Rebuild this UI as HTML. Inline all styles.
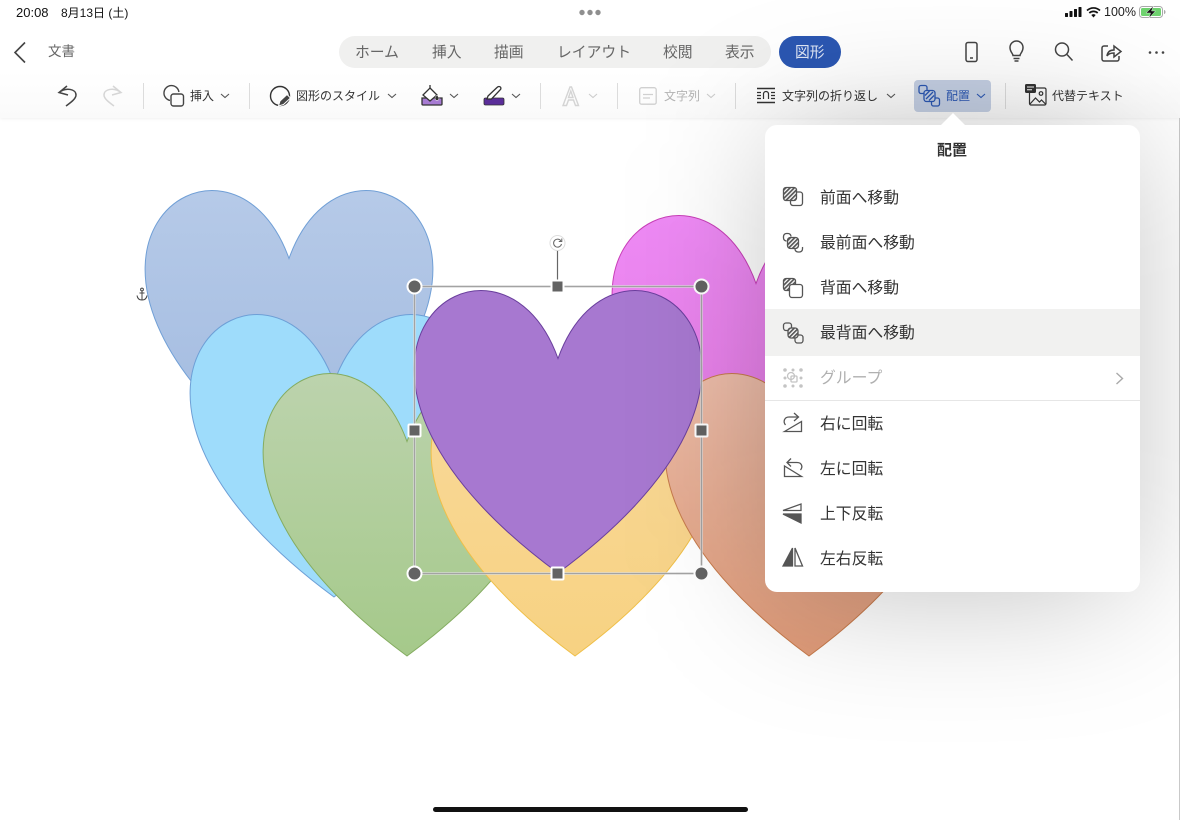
<!DOCTYPE html>
<html lang="ja"><head><meta charset="utf-8"><title>文書</title>
<style>
html,body{margin:0;padding:0;background:#fff}
#p{position:relative;width:1180px;height:820px;overflow:hidden;background:#fff;font-family:"Liberation Sans","Noto Sans CJK JP",sans-serif;color:#333}
#p>*{position:absolute}
.t{white-space:nowrap;line-height:20px;height:20px}
.tab{top:43px;font-size:14.8px;color:#666}
.tb{top:86px;font-size:12px;color:#333}
.dis{color:#b4b4b4}
.sep{top:83px;width:1px;height:26px;background:#dcdcdc}
.m{left:820px;font-size:15.8px;color:#333;line-height:20px;white-space:nowrap}
svg{position:absolute;overflow:visible}
</style></head><body><div id="p">

<div style="left:0;top:0;width:1180px;height:118px;background:linear-gradient(#fff 60%,#fafafa);box-shadow:0 1px 3px rgba(0,0,0,.06)"></div>

<svg style="left:0;top:0" width="1180" height="820" viewBox="0 0 1180 820">
<defs>
<path id="h" d="M143.5 71.5C203.3 -95.3 435 71.5 143.5 286C-148 71.5 83.7 -95.3 143.5 71.5Z"/>
<linearGradient id="g1" x1="0" y1="0" x2="0" y2="1"><stop offset="0" stop-color="#b6cae8"/><stop offset="1" stop-color="#a0b9df"/></linearGradient>
<linearGradient id="g2" x1="0" y1="0" x2="0" y2="1"><stop offset="0" stop-color="#bcd3ad"/><stop offset="1" stop-color="#a5c98a"/></linearGradient>
<linearGradient id="g3" x1="0" y1="0" x2="0" y2="1"><stop offset="0" stop-color="#f9d99a"/><stop offset="1" stop-color="#f7d282"/></linearGradient>
<linearGradient id="g4" x1="0" y1="0" x2="0" y2="1"><stop offset="0" stop-color="#ecbca9"/><stop offset="1" stop-color="#de9a78"/></linearGradient>
<linearGradient id="g5" x1="0" y1="0" x2="0" y2="1"><stop offset="0" stop-color="#ee8af5"/><stop offset="1" stop-color="#e27ae0"/></linearGradient>
<pattern id="ht" width="3" height="3" patternUnits="userSpaceOnUse" patternTransform="rotate(-45)"><rect width="3" height="3" fill="#fff" stroke="none"/><rect width="3" height="1.700" fill="#555" stroke="none"/></pattern>
</defs>
<use href="#h" transform="translate(145.5,187)" fill="url(#g1)" stroke="#709fd6" stroke-width="1"/>
<use href="#h" transform="translate(612.5,212)" fill="url(#g5)" stroke="#c83fb8" stroke-width="1"/>
<use href="#h" transform="translate(190.5,311)" fill="#9edcfb" stroke="#6d9fd6" stroke-width="1"/>
<use href="#h" transform="translate(263.5,370)" fill="url(#g2)" stroke="#84ac60" stroke-width="1"/>
<use href="#h" transform="translate(431.5,370)" fill="url(#g3)" stroke="#efbf48" stroke-width="1"/>
<use href="#h" transform="translate(665.5,370)" fill="url(#g4)" stroke="#c67a4b" stroke-width="1"/>
<use href="#h" transform="translate(414.5,287)" fill="#a778d0" stroke="#6a3f9d" stroke-width="1"/>

<!-- selection -->
<rect x="414.5" y="286.5" width="287" height="287" fill="none" stroke="#fff" stroke-width="3" opacity=".55"/>
<rect x="414.5" y="286.5" width="287" height="287" fill="none" stroke="#a3a3a3" stroke-width="1.6"/>
<line x1="557.5" y1="250" x2="557.5" y2="286" stroke="#666" stroke-width="1.2"/>
<g fill="#636363" stroke="#fff" stroke-width="2">
<circle cx="414.5" cy="286.5" r="7"/><circle cx="701.5" cy="286.5" r="7"/>
<circle cx="414.5" cy="573.5" r="7"/><circle cx="701.5" cy="573.5" r="7"/>
<rect x="551.5" y="280.5" width="12" height="12" rx="1"/><rect x="408.5" y="424.5" width="12" height="12" rx="1"/>
<rect x="695.5" y="424.5" width="12" height="12" rx="1"/><rect x="551.5" y="567.5" width="12" height="12" rx="1"/>
</g>
<circle cx="557.5" cy="243" r="7.5" fill="#fff" stroke="#ddd" stroke-width="1"/>
<path d="M561 241a4 4 0 1 0 .5 3" fill="none" stroke="#666" stroke-width="1"/><path d="M561.8 238.5v3h-3" fill="none" stroke="#666" stroke-width="1"/>

<!-- anchor -->
<g fill="none" stroke="#444" stroke-width="1">
<circle cx="142" cy="289.5" r="1.4"/><path d="M142 291v9M139.5 293h5M137 295.500c.5 3 2.500 4.500 5 4.500s4.500-1.500 5-4.500"/>
</g>
</svg>

<!-- status -->
<div class="t" style="left:16px;top:3px;font-size:13px;color:#111">20:08</div>
<div class="t" style="left:61px;top:3px;font-size:12px;color:#111">8月13日 (土)</div>
<svg style="left:579px;top:9px" width="22" height="7"><circle cx="3" cy="3.500" r="2.700" fill="#8f8f8f"/><circle cx="11" cy="3.500" r="2.700" fill="#8f8f8f"/><circle cx="19" cy="3.500" r="2.700" fill="#8f8f8f"/></svg>
<svg style="left:1065px;top:6px" width="36" height="12" fill="#111"><rect x="0" y="7" width="3" height="4" rx=".6"/><rect x="4.500" y="5" width="3" height="6" rx=".6"/><rect x="9" y="3" width="3" height="8" rx=".6"/><rect x="13.500" y="1" width="3" height="10" rx=".6"/>
<path d="M22 4.500a9.500 9.500 0 0 1 13 0M24.300 7a6.200 6.200 0 0 1 8.400 0" fill="none" stroke="#111" stroke-width="1.700"/><path d="M26.300 9a3.200 3.200 0 0 1 4.400 0L28.500 11.500z"/></svg>
<div class="t" style="left:1104px;top:2px;font-size:12.5px;color:#222">100%</div>
<svg style="left:1139px;top:6px" width="27" height="12"><rect x=".5" y=".5" width="23" height="11" rx="3" fill="#fff" stroke="#aaa"/><rect x="2" y="2" width="20" height="8" rx="1.500" fill="#6fd36f"/><path d="M25 4v4c1 0 1.500-1 1.500-2s-.5-2-1.500-2z" fill="#aaa"/><path d="M14.500 0L7 7h4.500L10 12l6.500-7H12.500z" fill="#111" stroke="#fff" stroke-width=".4"/></svg>

<!-- nav row -->
<svg style="left:13px;top:41px" width="14" height="22" fill="none" stroke="#444" stroke-width="1.600"><path d="M12 1.500L2 11.500l10 10"/></svg>
<div class="t" style="left:48px;top:42px;font-size:13.500px;color:#666">文書</div>

<div style="left:339px;top:36px;width:432px;height:32px;border-radius:16px;background:#f0f0ef"></div>
<div class="t tab" style="left:355px">ホーム</div>
<div class="t tab" style="left:432px">挿入</div>
<div class="t tab" style="left:494px">描画</div>
<div class="t tab" style="left:557px">レイアウト</div>
<div class="t tab" style="left:663px">校閲</div>
<div class="t tab" style="left:725px">表示</div>
<div style="left:779px;top:36px;width:62px;height:32px;border-radius:16px;background:#2b57b2"></div>
<div class="t" style="left:795px;top:43px;font-size:14.8px;color:#dfe6f5">図形</div>

<svg style="left:960px;top:40px" width="200" height="24" fill="none" stroke="#444" stroke-width="1.500">
<rect x="6" y="2.500" width="11" height="19" rx="2"/><path d="M10 18h3"/>
<path d="M53 15.500c0-2-3-3.500-3-8a6.500 6.500 0 0 1 13 0c0 4.500-3 6-3 8zM53.500 18.500h6M54.500 21h4"/>
<circle cx="102" cy="9.500" r="6.500"/><path d="M107 14.500l5.500 6"/>
<path d="M148 6h-4a2 2 0 0 0-2 2v11a2 2 0 0 0 2 2h13a2 2 0 0 0 2-2v-3"/><path d="M147 16c.5-4 3-6 7-6V6l7 5.500-7 5.500v-4c-3 0-5.500 .500-7 3z"/>
<circle cx="190" cy="12.500" r="1.300" fill="#444" stroke="none"/><circle cx="196.500" cy="12.500" r="1.300" fill="#444" stroke="none"/><circle cx="203" cy="12.500" r="1.300" fill="#444" stroke="none"/>
</svg>

<!-- toolbar -->
<svg style="left:56px;top:84px" width="70" height="24" fill="none" stroke="#444" stroke-width="1.500"><path d="M11 2L3 8.500l9 2.500M3 8.500C10 3 20 5 20 11c0 4-6 8-10 11"/><path d="M57 2l8 6.500-9 2.500M65 8.500C58 3 48 5 48 11c0 4 6 8 10 11" stroke="#d6d6d6"/></svg>
<div class="sep" style="left:143px"></div>
<svg style="left:163px;top:85px" width="22" height="22" fill="none" stroke="#444" stroke-width="1.400"><path d="M7 15.400A7.500 7.500 0 1 1 15.900 7"/><rect x="8" y="9" width="12.500" height="12" rx="2.500"/></svg>
<div class="t tb" style="left:190px">挿入</div>
<svg style="left:220px;top:93px" width="10" height="6" fill="none" stroke="#555" stroke-width="1.100"><path d="M1 1l4 3.500L9 1"/></svg>
<div class="sep" style="left:249px"></div>
<svg style="left:269px;top:85px" width="24" height="24" fill="none" stroke="#333" stroke-width="1.400"><circle cx="11" cy="11" r="9.500"/><path d="M9.500 21l1.500-5 7-6.500 3.500 3.500-7 6.500z" fill="#444" stroke="#fff" stroke-width="1"/></svg>
<div class="t tb" style="left:296px">図形のスタイル</div>
<svg style="left:387px;top:93px" width="10" height="6" fill="none" stroke="#555" stroke-width="1.100"><path d="M1 1l4 3.500L9 1"/></svg>
<svg style="left:421px;top:85px" width="24" height="22"><path d="M1 13h20v6a1 1 0 0 1-1 1H2a1 1 0 0 1-1-1z" fill="#a77bd3" stroke="#333" stroke-width="1.300"/><path d="M9 3l7 7-7 6-7-6z" fill="#fff" stroke="#333" stroke-width="1.300"/><path d="M9 0v3" stroke="#333" stroke-width="1.300"/><path d="M16 10c1.500 2 2 2.500 2 3.500a2 2 0 0 1-4 0c0-1 .5-1.500 2-3.500z" fill="#333" stroke="#fff" stroke-width=".5"/></svg>
<svg style="left:449px;top:93px" width="10" height="6" fill="none" stroke="#555" stroke-width="1.100"><path d="M1 1l4 3.500L9 1"/></svg>
<svg style="left:483px;top:85px" width="24" height="22"><rect x="1" y="13" width="20" height="7" rx="1.500" fill="#5b2e9a" stroke="#333" stroke-width=".8"/><path d="M4 14l1-3L14 2.500c2-2 5-.5 3.500 2L8.500 14z" fill="#fff" stroke="#333" stroke-width="1.300"/></svg>
<svg style="left:511px;top:93px" width="10" height="6" fill="none" stroke="#555" stroke-width="1.100"><path d="M1 1l4 3.500L9 1"/></svg>
<div class="sep" style="left:540px"></div>
<svg style="left:562px;top:85px" width="18" height="22" fill="none" stroke="#d4d4d4" stroke-width="1.400"><path d="M1 20.500L8 2h1.500l7 18.500h-3l-2-5.500h-5l-2 5.500zM6.500 12.500h4.500L8.800 6z"/></svg>
<svg style="left:588px;top:93px" width="10" height="6" fill="none" stroke="#ccc" stroke-width="1.100"><path d="M1 1l4 3.500L9 1"/></svg>
<div class="sep" style="left:617px"></div>
<svg style="left:639px;top:87px" width="18" height="18" fill="none" stroke="#d0d0d0" stroke-width="1.300"><rect x=".7" y=".7" width="16.500" height="16.500" rx="2"/><path d="M4 7.500h10M4 11h7"/></svg>
<div class="t tb dis" style="left:664px">文字列</div>
<svg style="left:706px;top:93px" width="10" height="6" fill="none" stroke="#ccc" stroke-width="1.100"><path d="M1 1l4 3.500L9 1"/></svg>
<div class="sep" style="left:735px"></div>
<svg style="left:757px;top:87px" width="19" height="17" fill="none" stroke="#333" stroke-width="1.200"><path d="M0 1.500h18M0 15.500h18" stroke-width="1.500"/><path d="M0 5.500h4M0 8.500h4M0 11.500h4M14 5.500h4M14 8.500h4M14 11.500h4M6.500 12V7a2.500 2.500 0 0 1 5 0v5"/></svg>
<div class="t tb" style="left:782px">文字列の折り返し</div>
<svg style="left:886px;top:93px" width="10" height="6" fill="none" stroke="#555" stroke-width="1.100"><path d="M1 1l4 3.500L9 1"/></svg>

<div style="left:914px;top:80px;width:77px;height:32px;border-radius:4px;background:#c5d0e4"></div>
<svg style="left:918px;top:84px" width="24" height="24" fill="none" stroke="#2b57b2" stroke-width="1.300"><rect x="1" y="1.500" width="8" height="8" rx="2"/><rect x="13.500" y="14" width="8" height="8" rx="2"/><rect x="6" y="6.500" width="11" height="11" rx="2.500" fill="#c5d0e4"/><path d="M8 15l7-7M7 11.500l4.500-4.500M11 16.500l5-5"/></svg>
<div class="t tb" style="left:946px;color:#2b57b2">配置</div>
<svg style="left:976px;top:93px" width="10" height="6" fill="none" stroke="#2b57b2" stroke-width="1.100"><path d="M1 1l4 3.500L9 1"/></svg>
<div class="sep" style="left:1005px"></div>
<svg style="left:1025px;top:84px" width="22" height="22" fill="none" stroke="#333" stroke-width="1.200"><rect x="4.500" y="4" width="16.500" height="17" rx="1.500"/><path d="M5 20l5.500-6 4 4 2-2 4 4"/><circle cx="16" cy="9.500" r="1.800"/><rect x="0" y="0" width="11" height="9" rx="1.500" fill="#333" stroke="none"/><path d="M2 3h7M2 5.800h5" stroke="#fff" stroke-width="1"/></svg>
<div class="t tb" style="left:1052px">代替テキスト</div>

<!-- home indicator -->
<div style="left:433px;top:807px;width:315px;height:5px;border-radius:3px;background:#111"></div>
<div style="left:1179px;top:118px;width:1px;height:702px;background:#c9c9c9"></div>

<!-- popover -->
<div style="left:775px;top:135px;width:355px;height:457px;border-radius:40px;background:rgba(0,0,0,.25);filter:blur(70px)"></div>
<div style="left:765px;top:125px;width:375px;height:467px;border-radius:12px;background:#fff"></div>
<svg style="left:940px;top:113px" width="26" height="13"><path d="M0 13L13 0l13 13z" fill="#fff"/></svg>
<div class="t" style="left:937px;top:141px;font-size:15px;font-weight:bold;color:#333">配置</div>
<div style="left:765px;top:309px;width:375px;height:47px;background:#f1f1f0"></div>
<div style="left:765px;top:400px;width:375px;height:1px;background:#e6e6e6"></div>

<div class="m" style="top:189px">前面へ移動</div>
<div class="m" style="top:234px">最前面へ移動</div>
<div class="m" style="top:279px">背面へ移動</div>
<div class="m" style="top:324px">最背面へ移動</div>
<div class="m" style="top:369px;color:#b0b0b0">グループ</div>
<div class="m" style="top:415px">右に回転</div>
<div class="m" style="top:460px">左に回転</div>
<div class="m" style="top:505px">上下反転</div>
<div class="m" style="top:550px">左右反転</div>

<svg style="left:1115px;top:372px" width="9" height="13" fill="none" stroke="#aaa" stroke-width="1.400"><path d="M1.500 1l6 5.500-6 5.500"/></svg>

<svg style="left:780px;top:184px" width="26" height="26" viewBox="0 0 26 26" fill="none" stroke="#555" stroke-width="1.300">
<path d="M17 8h3a2.500 2.500 0 0 1 2.500 2.500V19a2.500 2.500 0 0 1-2.500 2.500h-7A2.500 2.500 0 0 1 10.500 19v-2"/>
<rect x="3.500" y="3.500" width="13" height="13" rx="2.500" fill="url(#ht)"/>
</svg>
<svg style="left:780px;top:230px" width="26" height="26" viewBox="0 0 26 26" fill="none" stroke="#555" stroke-width="1.300">
<path d="M6.500 11A3 3 0 0 1 3.500 8V6.500a3 3 0 0 1 3-3H8a3 3 0 0 1 3 3"/>
<path d="M22.500 17a3 3 0 0 1 0 1v1a3 3 0 0 1-3 3H18a3 3 0 0 1-3-3"/>
<rect x="7.500" y="7.500" width="11" height="11" rx="3" fill="url(#ht)"/>
</svg>
<svg style="left:780px;top:275px" width="26" height="26" viewBox="0 0 26 26" fill="none" stroke="#555" stroke-width="1.300">
<rect x="3.500" y="3.500" width="12" height="12" rx="2.500" fill="url(#ht)"/>
<rect x="9.500" y="9.500" width="13" height="13" rx="2.500" fill="#fff"/>
</svg>
<svg style="left:780px;top:320px" width="26" height="26" viewBox="0 0 26 26" fill="none" stroke="#555" stroke-width="1.300">
<rect x="3.500" y="3" width="8" height="7.500" rx="2.500" fill="#f1f1f0"/>
<rect x="15" y="15" width="8" height="8" rx="2.500" fill="#f1f1f0"/>
<rect x="8" y="8" width="10" height="10" rx="3" fill="url(#ht)"/>
</svg>
<svg style="left:780px;top:365px" width="26" height="26" viewBox="0 0 26 26" fill="none" stroke="#c4c4c4" stroke-width="1.300">
<g fill="#c4c4c4" stroke="none"><circle cx="5" cy="5" r="1.800"/><circle cx="13" cy="5" r="1.500"/><circle cx="21" cy="5" r="1.800"/><circle cx="5" cy="21" r="1.800"/><circle cx="13" cy="21" r="1.500"/><circle cx="21" cy="21" r="1.800"/><circle cx="5" cy="13" r="1.500"/><circle cx="21" cy="13" r="1.500"/></g>
<circle cx="11" cy="11" r="3.500"/><rect x="11" y="11" width="6" height="6" rx="1"/>
</svg>

<svg style="left:780px;top:411px" width="26" height="26" viewBox="0 0 26 26" fill="none" stroke="#555" stroke-width="1.300">
<path d="M4.500 20.500L21.500 10.500v10z"/><path d="M18 6H9C4 6 3 11 5.500 14"/><path d="M14 2l4.500 4L14 10"/>
</svg>
<svg style="left:780px;top:456px" width="26" height="26" viewBox="0 0 26 26" fill="none" stroke="#555" stroke-width="1.300">
<path d="M4.500 10v10.500h17z"/><path d="M7 6.500h10c5 0 6 4.500 3.500 7.500"/><path d="M11 2.500L7 6.500l4 4"/>
</svg>
<svg style="left:780px;top:501px" width="26" height="26" viewBox="0 0 26 26" fill="none" stroke="#555" stroke-width="1.300">
<path d="M3 9.500L21 3v6.500z"/><path d="M3 13h18v9z" fill="#555"/>
</svg>
<svg style="left:780px;top:546px" width="26" height="26" viewBox="0 0 26 26" fill="none" stroke="#555" stroke-width="1.300">
<path d="M3 20L12.500 2v18z" fill="#555"/><path d="M15 2l7.500 18H15z"/>
</svg>

</div></body></html>
